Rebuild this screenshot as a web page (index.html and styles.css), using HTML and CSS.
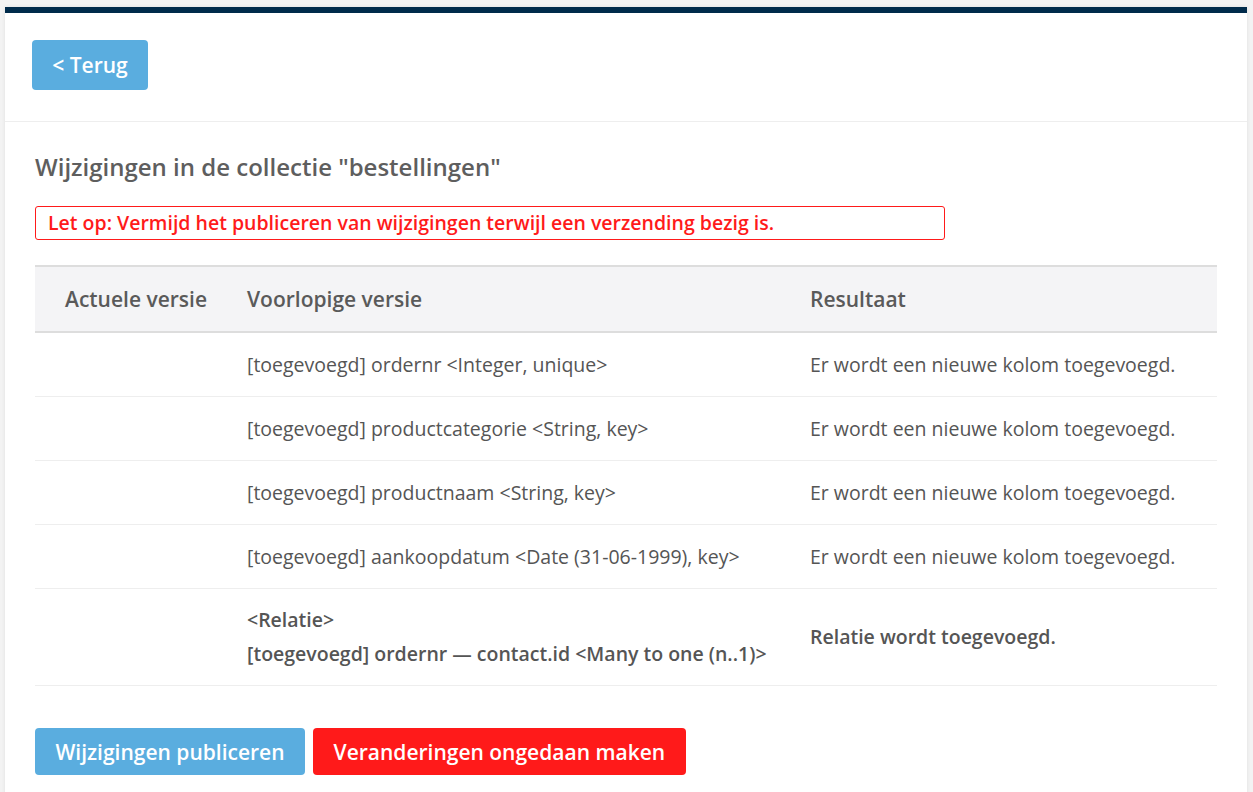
FILE: index.html
```html
<!DOCTYPE html>
<html lang="nl">
<head>
<meta charset="utf-8">
<title>Wijzigingen</title>
<link rel="stylesheet" href="styles.css">
</head>
<body>
<div class="card">
  <div class="topbar"></div>
  <div class="header">
    <button class="btn btn-blue btn-back">&lt; Terug</button>
  </div>
  <div class="content">
    <h1 class="title">Wijzigingen in de collectie "bestellingen"</h1>
    <div class="alert">Let op: Vermijd het publiceren van wijzigingen terwijl een verzending bezig is.</div>
    <table class="changes">
      <colgroup>
        <col class="c1"><col class="c2"><col class="c3">
      </colgroup>
      <thead>
        <tr><th>Actuele versie</th><th>Voorlopige versie</th><th>Resultaat</th></tr>
      </thead>
      <tbody>
        <tr><td></td><td>[toegevoegd] ordernr &lt;Integer, unique&gt;</td><td>Er wordt een nieuwe kolom toegevoegd.</td></tr>
        <tr><td></td><td>[toegevoegd] productcategorie &lt;String, key&gt;</td><td>Er wordt een nieuwe kolom toegevoegd.</td></tr>
        <tr><td></td><td>[toegevoegd] productnaam &lt;String, key&gt;</td><td>Er wordt een nieuwe kolom toegevoegd.</td></tr>
        <tr><td></td><td>[toegevoegd] aankoopdatum &lt;Date (31-06-1999), key&gt;</td><td>Er wordt een nieuwe kolom toegevoegd.</td></tr>
        <tr class="rel"><td></td><td>&lt;Relatie&gt;<br>[toegevoegd] ordernr — contact.id &lt;Many to one (n..1)&gt;</td><td>Relatie wordt toegevoegd.</td></tr>
      </tbody>
    </table>
    <div class="actions">
      <button class="btn btn-blue btn-action">Wijzigingen publiceren</button>
      <button class="btn btn-red btn-action">Veranderingen ongedaan maken</button>
    </div>
  </div>
</div>
</body>
</html>
```
FILE: styles.css
```css
html, body {
  margin: 0;
  padding: 0;
}
body {
  background: #f3f3f3;
  font-family: "Open Sans", "Liberation Sans", sans-serif;
  color: #585858;
  padding: 7px 6px 0 5px;
}
.card {
  background: #fff;
  box-shadow: 0 0 4px rgba(0,0,0,0.08);
  min-height: 800px;
}
.topbar {
  height: 6px;
  background: #002b4b;
}
.header {
  padding: 27px 27px 31px;
  border-bottom: 1px solid #eeeeee;
}
.btn {
  border: none;
  border-radius: 4px;
  color: #fff;
  font-family: "Open Sans", "Liberation Sans", sans-serif;
  font-weight: 600;
  cursor: pointer;
}
.btn-blue { background: #5aaddf; }
.btn-red { background: #ff1a1a; }
.btn-back {
  width: 116px;
  height: 50px;
  font-size: 21px;
  padding: 0;
}
.content {
  padding: 27px 30px 0 30px;
}
.title {
  margin: 0;
  font-size: 24px;
  font-weight: 600;
  color: #5e5e5e;
  line-height: 36px;
}
.alert {
  margin-top: 21px;
  width: 910px;
  box-sizing: border-box;
  border: 1px solid #ff1a1a;
  border-radius: 3px;
  color: #ff1a1a;
  font-size: 19.5px;
  font-weight: 600;
  line-height: 32px;
  padding: 0 12px;
}
.changes {
  margin-top: 25px;
  width: 1182px;
  border-collapse: collapse;
  font-size: 19.5px;
}
.c1 { width: 182px; }
.c2 { width: 563px; }
.c3 { width: 437px; }
.changes thead tr {
  background: #f4f4f6;
  border-top: 2px solid #dddddd;
  border-bottom: 2px solid #dddddd;
}
.changes th {
  text-align: left;
  font-weight: 600;
  font-size: 21px;
  color: #5a5a5a;
  height: 64px;
  padding: 0 0 0 30px;
  white-space: nowrap;
}
.changes td {
  height: 63px;
  padding: 0 0 0 30px;
  border-bottom: 1px solid #eeeeee;
  color: #555555;
  white-space: nowrap;
}
.changes tr.rel td {
  height: 96px;
  font-weight: 600;
  line-height: 34px;
}
.actions {
  margin-top: 42px;
  display: flex;
  gap: 8px;
}
.btn-action {
  height: 47px;
  font-size: 21px;
  padding: 0 20.5px;
}
```
